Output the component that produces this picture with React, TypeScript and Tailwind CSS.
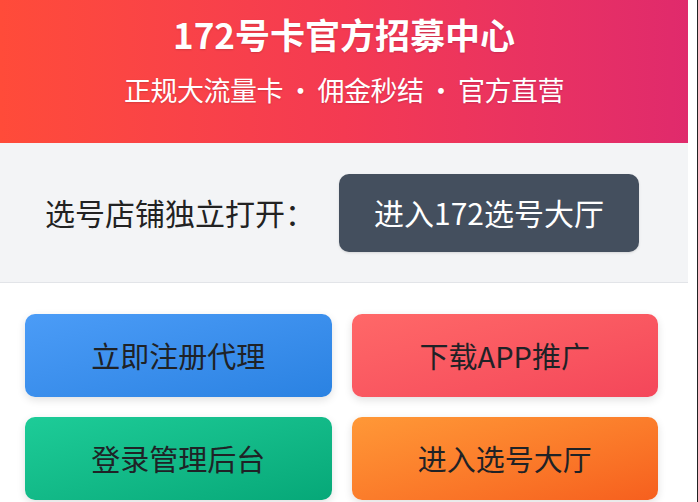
import React from 'react';

const ACTIONS = [
  { label: '立即注册代理', cls: 'bg-gradient-to-br from-[#4b9cf7] to-[#2a82e2]' },
  { label: '下载APP推广', cls: 'bg-gradient-to-br from-[#ff6868] to-[#f4465a]' },
  { label: '登录管理后台', cls: 'bg-gradient-to-br from-[#1dcc98] to-[#06a878]' },
  { label: '进入选号大厅', cls: 'bg-gradient-to-br from-[#ff9837] to-[#f65f1e]' },
];

const App: React.FC = () => {
  return (
    <div className="flex w-[698px] h-[502px] overflow-hidden bg-white font-['Noto_Sans_CJK_SC','Noto_Sans',sans-serif]">
      <div className="flex flex-col w-[688px] shrink-0">
        {/* Header */}
        <div className="h-[143px] shrink-0 flex flex-col items-center bg-gradient-to-r from-[#ff4b39] via-[#f43a52] to-[#e02a6c] text-white [text-shadow:0_1px_2px_rgba(0,0,0,0.15)]">
          <h1 className="mt-[12px] text-[35px] leading-[44px] font-bold">172号卡官方招募中心</h1>
          <p className="mt-[17px] text-[27px] leading-[34px] tracking-[-0.5px]">
            正规大流量卡<span className="mx-[4px]">·</span>佣金秒结<span className="mx-[4px]">·</span>官方直营
          </p>
        </div>

        {/* Store link */}
        <div className="h-[140px] shrink-0 flex items-center pl-[45px] bg-[#f3f4f6] border-b border-[#e2e4e8]">
          <span className="w-[294px] text-[30px] text-[#222]">选号店铺独立打开：</span>
          <button className="w-[300px] h-[78px] rounded-[10px] bg-[#444f5e] text-white text-[30px] shadow-sm">
            进入172选号大厅
          </button>
        </div>

        {/* Actions */}
        <div className="grid grid-cols-2 gap-x-[20px] gap-y-[20px] pl-[25px] pr-[30px] pt-[31px]">
          {ACTIONS.map((a) => (
            <button
              key={a.label}
              className={`h-[83px] rounded-[10px] text-[29px] font-normal text-[#1f2226] shadow-[0_3px_8px_rgba(0,0,0,0.12)] ${a.cls}`}
            >
              {a.label}
            </button>
          ))}
        </div>
      </div>
      <div className="flex-1 bg-white border-r border-[#222]" />
    </div>
  );
};

export default App;
